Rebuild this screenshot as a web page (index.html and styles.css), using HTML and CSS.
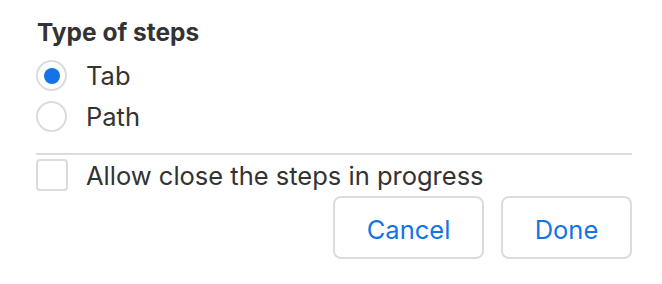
FILE: index.html
```html
<!DOCTYPE html>
<html>
<head>
<meta charset="utf-8">
<link rel="stylesheet" href="styles.css">
</head>
<body>
<div class="panel">
  <div class="title">Type of steps</div>
  <div class="options">
    <div class="option">
      <span class="radio checked"><span class="dot"></span></span>
      <span class="label">Tab</span>
    </div>
    <div class="option">
      <span class="radio"></span>
      <span class="label">Path</span>
    </div>
  </div>
  <div class="separator"></div>
  <div class="check-row">
    <span class="checkbox"></span>
    <span class="label">Allow close the steps in progress</span>
  </div>
  <div class="actions">
    <button class="btn btn-cancel">Cancel</button>
    <button class="btn btn-done">Done</button>
  </div>
</div>
</body>
</html>
```
FILE: styles.css
```css
html, body {
  margin: 0;
  padding: 0;
  background: #ffffff;
}
body {
  font-family: Inter, "Liberation Sans", Arial, sans-serif;
  color: #333333;
}
.panel {
  padding: 17px 30px 0 36px;
  display: flex;
  flex-direction: column;
}
.title {
  font-size: 24.5px;
  font-weight: 700;
  line-height: 30px;
  height: 30px;
  margin-bottom: 8px;
  color: #333333;
  padding-left: 1px;
}
.options {
  display: flex;
  flex-direction: column;
}
.option {
  height: 41px;
  display: flex;
  align-items: center;
  gap: 19px;
}
.radio {
  width: 31px;
  height: 31px;
  box-sizing: border-box;
  border: 2px solid #dcdcdc;
  border-radius: 50%;
  display: flex;
  align-items: center;
  justify-content: center;
  flex: none;
}
.dot {
  width: 16px;
  height: 16px;
  border-radius: 50%;
  background: #1473e6;
}
.label {
  font-size: 25.5px;
  line-height: 30px;
  color: #333333;
}
.separator {
  height: 2px;
  background: #dcdcdc;
  margin-top: 16px;
}
.check-row {
  margin-top: 4px;
  height: 32px;
  display: flex;
  align-items: center;
  gap: 18px;
}
.check-row .label {
  padding-top: 2px;
}
.checkbox {
  width: 32px;
  height: 32px;
  box-sizing: border-box;
  border: 2px solid #dcdcdc;
  border-radius: 4px;
  flex: none;
}
.actions {
  margin-top: 5px;
  display: flex;
  justify-content: flex-end;
  gap: 17px;
  padding-right: 0;
}
.btn {
  height: 63px;
  box-sizing: border-box;
  border: 2px solid #dcdcdc;
  border-radius: 8px;
  background: #ffffff;
  color: #1473e6;
  font-family: Inter, "Liberation Sans", Arial, sans-serif;
  font-size: 25.5px;
  padding: 3px 0 0 0;
  margin: 0;
}
.btn-cancel {
  width: 151px;
}
.btn-done {
  width: 131px;
}
```
